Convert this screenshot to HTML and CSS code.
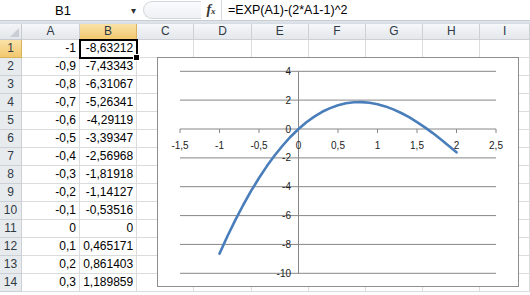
FILE: index.html
```html
<!DOCTYPE html>
<html lang="ru">
<head>
  <meta charset="UTF-8" />
  <title>Лист1</title>
  <link rel="stylesheet" href="styles.css">
</head>
<body>

  <div class="formula-bar">
    <div class="name-box">B1</div>
    <div class="caret">&#9662;</div>
    <div class="grip"></div>
    <div class="fx"><i>f</i><small>x</small></div>
    <div class="formula">=EXP(A1)-(2*A1-1)^2</div>
  </div>
  <div class="bar-gap"></div>

  <div class="sheet">
    <div class="corner"></div>
    <div class="col-head">A</div>
    <div class="col-head active">B</div>
    <div class="col-head">C</div>
    <div class="col-head">D</div>
    <div class="col-head">E</div>
    <div class="col-head">F</div>
    <div class="col-head">G</div>
    <div class="col-head">H</div>
    <div class="col-head">I</div>

    <div class="row-head active">1</div><div class="cell">-1</div><div class="cell selected">-8,63212</div><div class="cell"></div><div class="cell"></div><div class="cell"></div><div class="cell"></div><div class="cell"></div><div class="cell"></div><div class="cell"></div>
    <div class="row-head">2</div><div class="cell">-0,9</div><div class="cell">-7,43343</div><div class="cell"></div><div class="cell"></div><div class="cell"></div><div class="cell"></div><div class="cell"></div><div class="cell"></div><div class="cell"></div>
    <div class="row-head">3</div><div class="cell">-0,8</div><div class="cell">-6,31067</div><div class="cell"></div><div class="cell"></div><div class="cell"></div><div class="cell"></div><div class="cell"></div><div class="cell"></div><div class="cell"></div>
    <div class="row-head">4</div><div class="cell">-0,7</div><div class="cell">-5,26341</div><div class="cell"></div><div class="cell"></div><div class="cell"></div><div class="cell"></div><div class="cell"></div><div class="cell"></div><div class="cell"></div>
    <div class="row-head">5</div><div class="cell">-0,6</div><div class="cell">-4,29119</div><div class="cell"></div><div class="cell"></div><div class="cell"></div><div class="cell"></div><div class="cell"></div><div class="cell"></div><div class="cell"></div>
    <div class="row-head">6</div><div class="cell">-0,5</div><div class="cell">-3,39347</div><div class="cell"></div><div class="cell"></div><div class="cell"></div><div class="cell"></div><div class="cell"></div><div class="cell"></div><div class="cell"></div>
    <div class="row-head">7</div><div class="cell">-0,4</div><div class="cell">-2,56968</div><div class="cell"></div><div class="cell"></div><div class="cell"></div><div class="cell"></div><div class="cell"></div><div class="cell"></div><div class="cell"></div>
    <div class="row-head">8</div><div class="cell">-0,3</div><div class="cell">-1,81918</div><div class="cell"></div><div class="cell"></div><div class="cell"></div><div class="cell"></div><div class="cell"></div><div class="cell"></div><div class="cell"></div>
    <div class="row-head">9</div><div class="cell">-0,2</div><div class="cell">-1,14127</div><div class="cell"></div><div class="cell"></div><div class="cell"></div><div class="cell"></div><div class="cell"></div><div class="cell"></div><div class="cell"></div>
    <div class="row-head">10</div><div class="cell">-0,1</div><div class="cell">-0,53516</div><div class="cell"></div><div class="cell"></div><div class="cell"></div><div class="cell"></div><div class="cell"></div><div class="cell"></div><div class="cell"></div>
    <div class="row-head">11</div><div class="cell">0</div><div class="cell">0</div><div class="cell"></div><div class="cell"></div><div class="cell"></div><div class="cell"></div><div class="cell"></div><div class="cell"></div><div class="cell"></div>
    <div class="row-head">12</div><div class="cell">0,1</div><div class="cell">0,465171</div><div class="cell"></div><div class="cell"></div><div class="cell"></div><div class="cell"></div><div class="cell"></div><div class="cell"></div><div class="cell"></div>
    <div class="row-head">13</div><div class="cell">0,2</div><div class="cell">0,861403</div><div class="cell"></div><div class="cell"></div><div class="cell"></div><div class="cell"></div><div class="cell"></div><div class="cell"></div><div class="cell"></div>
    <div class="row-head">14</div><div class="cell">0,3</div><div class="cell">1,189859</div><div class="cell"></div><div class="cell"></div><div class="cell"></div><div class="cell"></div><div class="cell"></div><div class="cell"></div><div class="cell"></div>

    <!-- диаграмма поверх ячеек -->
    <div class="chart">
      <svg width="362" height="230" viewBox="0 0 362 230">
        <g class="grid">
          <line x1="23" y1="14.3" x2="339" y2="14.3" />
          <line x1="23" y1="43.1" x2="339" y2="43.1" />
          <line x1="23" y1="100.9" x2="339" y2="100.9" />
          <line x1="23" y1="129.7" x2="339" y2="129.7" />
          <line x1="23" y1="158.6" x2="339" y2="158.6" />
          <line x1="23" y1="187.4" x2="339" y2="187.4" />
          <line x1="23" y1="216.3" x2="339" y2="216.3" />
        </g>
        <g class="axis">
          <line x1="141.5" y1="14.3" x2="141.5" y2="216.3" />
          <line x1="23" y1="72" x2="339" y2="72" />
          <line x1="23" y1="72" x2="23" y2="76" />
          <line x1="62.5" y1="72" x2="62.5" y2="76" />
          <line x1="102" y1="72" x2="102" y2="76" />
          <line x1="141.5" y1="72" x2="141.5" y2="76" />
          <line x1="181" y1="72" x2="181" y2="76" />
          <line x1="220.5" y1="72" x2="220.5" y2="76" />
          <line x1="260" y1="72" x2="260" y2="76" />
          <line x1="299.5" y1="72" x2="299.5" y2="76" />
          <line x1="339" y1="72" x2="339" y2="76" />
        </g>
        <g class="y-labels">
          <text x="134" y="17.8">4</text>
          <text x="134" y="46.6">2</text>
          <text x="134" y="75.5">0</text>
          <text x="134" y="104.4">-2</text>
          <text x="134" y="133.2">-4</text>
          <text x="134" y="162.1">-6</text>
          <text x="134" y="190.9">-8</text>
          <text x="134" y="219.8">-10</text>
        </g>
        <g class="x-labels">
          <text x="23" y="92">-1,5</text>
          <text x="62.5" y="92">-1</text>
          <text x="102" y="92">-0,5</text>
          <text x="141.5" y="92">0</text>
          <text x="181" y="92">0,5</text>
          <text x="220.5" y="92">1</text>
          <text x="260" y="92">1,5</text>
          <text x="299.5" y="92">2</text>
          <text x="339" y="92">2,5</text>
        </g>
        <polyline class="series" points="62.5,196.6 70.4,179.3 78.3,163.1 86.2,148 94.1,133.9 102,121 109.9,109.1 117.8,98.3 125.7,88.5 133.6,79.7 141.5,72 149.4,65.3 157.3,59.6 165.2,54.8 173.1,51.1 181,48.2 188.9,46.3 196.8,45.3 204.7,45.1 212.6,45.7 220.5,47.2 228.4,49.4 236.3,52.4 244.2,56 252.1,60.2 260,65.1 267.9,70.4 275.8,76.1 283.7,82.3 291.6,88.7 299.5,95.3" />
      </svg>
    </div>
  </div>

</body>
</html>
```

FILE: styles.css
```css
body {
  margin: 0;
  width: 530px;
  height: 295px;
  overflow: hidden;
  background-color: white;
  font-family: "Liberation Sans", Arial, sans-serif;
  font-size: 12px;
  color: black;
}
.formula-bar {
  display: flex;
  align-items: center;
  height: 20px;
  background-color: white;
}
.name-box {
  width: 126px;
  text-align: center;
  font-size: 13px;
}
.caret {
  width: 14px;
  font-size: 10px;
  color: #333;
  text-align: center;
}
.grip {
  width: 58px;
  height: 18px;
  margin-left: 3px;
  border: 1px solid #d3d7dd;
  border-right: none;
  border-radius: 10px 0 0 10px;
  background: linear-gradient(#fafbfc, #eef0f3);
  box-sizing: border-box;
}
.fx {
  width: 20px;
  height: 20px;
  line-height: 20px;
  text-align: center;
  font-family: "Liberation Serif", serif;
  font-weight: bold;
  color: #333;
  border-right: 1px solid #d6dbe2;
  margin-right: 6px;
}
.fx i {
  font-size: 14px;
}
.fx small {
  font-size: 9px;
  font-style: italic;
}
.formula {
  font-size: 12.5px;
}
.bar-gap {
  height: 4px;
  background: linear-gradient(#e3e7ec, #d5dbe2);
  border-top: 1px solid #c8cdd4;
  box-sizing: border-box;
}
.sheet {
  position: relative;
  display: grid;
  grid-template-columns: 22px 58px repeat(7, 57.2px) 1fr;
  grid-template-rows: 16px repeat(14, 18px);
}
.corner {
  background: linear-gradient(#f3f5f7, #e3e6ea);
  border-right: 1px solid #c6cbd1;
  border-bottom: 1px solid #c6cbd1;
  position: relative;
}
.corner::after {
  content: "";
  position: absolute;
  right: 2px;
  bottom: 2px;
  border-left: 9px solid transparent;
  border-bottom: 9px solid #c9ced4;
}
.col-head, .row-head {
  background: linear-gradient(#f5f7f9, #e4e7eb);
  color: #2f3a45;
  text-align: center;
  border-right: 1px solid #cdd1d6;
  border-bottom: 1px solid #cdd1d6;
  box-sizing: border-box;
}
.col-head {
  line-height: 15px;
}
.row-head {
  line-height: 17px;
  background: #e8ebee;
}
.col-head.active, .row-head.active {
  background: linear-gradient(#fae2a8, #f2c86f);
  border-color: #d9b25e;
}
.cell {
  border-right: 1px solid #dadcdd;
  border-bottom: 1px solid #dadcdd;
  box-sizing: border-box;
  text-align: right;
  padding-right: 3px;
  line-height: 17px;
  white-space: nowrap;
}
.cell.selected {
  position: relative;
  outline: 2px solid black;
  outline-offset: -1px;
}
.cell.selected::after {
  content: "";
  position: absolute;
  right: -4px;
  bottom: -4px;
  width: 5px;
  height: 5px;
  background-color: black;
  border: 1px solid white;
}
.chart {
  position: absolute;
  left: 157px;
  top: 33px;
  width: 362px;
  height: 230px;
  border: 1px solid #8e8e8e;
  background-color: white;
  box-sizing: border-box;
}
.chart svg {
  display: block;
  margin: -1px;
}
.grid line, .axis line {
  stroke: #868686;
  stroke-width: 1;
}
.y-labels text, .x-labels text {
  font-family: "Liberation Sans", Arial, sans-serif;
  font-size: 10px;
  fill: #222;
}
.y-labels text {
  text-anchor: end;
}
.x-labels text {
  text-anchor: middle;
}
.series {
  fill: none;
  stroke: #4a7ebb;
  stroke-width: 2.6;
  stroke-linejoin: round;
  stroke-linecap: round;
}
```
